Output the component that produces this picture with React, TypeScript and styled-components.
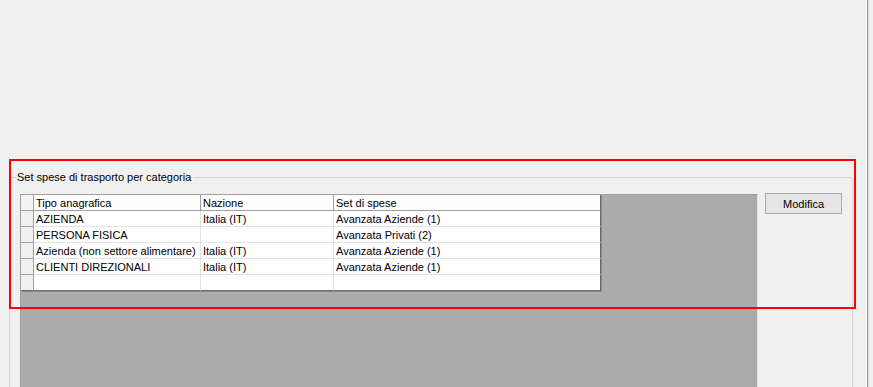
import React from 'react';
import styled, { createGlobalStyle } from 'styled-components';

const GlobalStyle = createGlobalStyle`
  html, body {
    margin: 0;
    padding: 0;
    background: #f0f0f0;
  }
  body {
    font-family: "Liberation Sans", Arial, sans-serif;
    font-size: 11px;
    color: #000;
  }
`;

const Page = styled.div`
  position: relative;
  display: flex;
  width: 873px;
  height: 387px;
  overflow: hidden;
  background: #f0f0f0;
`;

const Main = styled.div`
  width: 868px;
  padding-top: 171px;
  box-sizing: border-box;
  border-right: 1px solid #a0a0a0;
  box-shadow: 1px 0 0 #d6d6d6;
`;

const GroupBox = styled.fieldset`
  margin: 0 0 0 9px;
  width: 844px;
  box-sizing: border-box;
  padding: 10px 10px 0 10px;
  border: 1px solid #d5d5d5;
  border-radius: 3px;
  min-width: 0;
`;

const GroupTitle = styled.legend`
  margin-left: -4px;
  padding: 0 2px 0 1px;
  line-height: 13px;
  font-size: 11px;
`;

const GroupBody = styled.div`
  display: flex;
  align-items: flex-start;
  gap: 7px;
`;

const GridArea = styled.div`
  width: 739px;
  height: 220px;
  box-sizing: border-box;
  background: #ababab;
  border-top: 1px solid #a0a0a0;
  border-left: 1px solid #a0a0a0;
  border-right: 1px solid #e3e3e3;
`;

const Table = styled.div`
  display: grid;
  grid-template-columns: 13px 167px 133px 267px;
  width: 580px;
  background: #fff;
  box-shadow: 1px 1px 0 #8a8a8a;
`;

const HeaderCell = styled.div<{ $last?: boolean }>`
  height: 16px;
  box-sizing: border-box;
  line-height: 15px;
  padding: 1px 0 0 2px;
  white-space: nowrap;
  background: #fdfdfd;
  border-bottom: 1px solid #a0a0a0;
  border-right: 1px solid ${({ $last }) => ($last ? '#696969' : '#a0a0a0')};
`;

const RowHeader = styled.div<{ $top?: boolean; $bottom?: boolean }>`
  height: 16px;
  box-sizing: border-box;
  background: ${({ $top }) => ($top ? '#f4f4f4' : '#f0f0f0')};
  border-right: 1px solid #a0a0a0;
  border-bottom: 1px solid ${({ $bottom }) => ($bottom ? '#696969' : '#a0a0a0')};
`;

const Cell = styled.div<{ $last?: boolean; $bottom?: boolean }>`
  height: 16px;
  box-sizing: border-box;
  line-height: 15px;
  padding: 1px 0 0 2px;
  white-space: nowrap;
  background: #fff;
  border-right: 1px solid ${({ $last }) => ($last ? '#696969' : '#e3e3e3')};
  border-bottom: 1px solid ${({ $bottom }) => ($bottom ? '#696969' : '#e3e3e3')};
`;

const Button = styled.button`
  margin-top: -1px;
  width: 77px;
  height: 21px;
  box-sizing: border-box;
  background: #e5e5e5;
  border: 1px solid #adadad;
  font-family: "Liberation Sans", Arial, sans-serif;
  font-size: 11px;
  color: #000;
  padding: 0;
  line-height: 18px;
`;

const Highlight = styled.div`
  position: absolute;
  left: 9px;
  top: 159px;
  width: 847px;
  height: 150px;
  box-sizing: border-box;
  border: 2px solid #ff0000;
  pointer-events: none;
`;

const columns = ['Tipo anagrafica', 'Nazione', 'Set di spese'];

const rows = [
  ['AZIENDA', 'Italia (IT)', 'Avanzata Aziende (1)'],
  ['PERSONA FISICA', '', 'Avanzata Privati (2)'],
  ['Azienda (non settore alimentare)', 'Italia (IT)', 'Avanzata Aziende (1)'],
  ['CLIENTI DIREZIONALI', 'Italia (IT)', 'Avanzata Aziende (1)'],
  ['', '', ''],
];

const App: React.FC = () => {
  return (
    <>
      <GlobalStyle />
      <Page>
        <Main>
          <GroupBox>
            <GroupTitle>Set spese di trasporto per categoria</GroupTitle>
            <GroupBody>
              <GridArea>
                <Table>
                  <RowHeader $top />
                  {columns.map((c, i) => (
                    <HeaderCell key={c} $last={i === columns.length - 1}>
                      {c}
                    </HeaderCell>
                  ))}
                  {rows.map((row, r) => (
                    <React.Fragment key={r}>
                      <RowHeader $bottom={r === rows.length - 1} />
                      {row.map((value, c) => (
                        <Cell
                          key={c}
                          $last={c === row.length - 1}
                          $bottom={r === rows.length - 1}
                        >
                          {value}
                        </Cell>
                      ))}
                    </React.Fragment>
                  ))}
                </Table>
              </GridArea>
              <Button>Modifica</Button>
            </GroupBody>
          </GroupBox>
        </Main>
      </Page>
      <Highlight />
    </>
  );
};

export default App;
